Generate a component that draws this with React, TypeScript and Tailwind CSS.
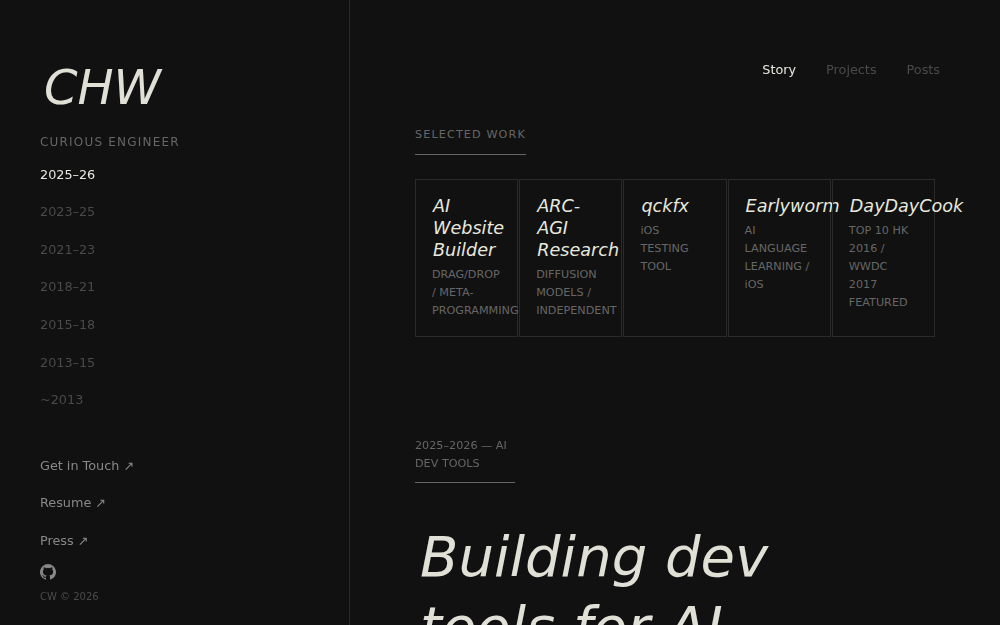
const FONT = "font-['DejaVu_Sans',sans-serif]";

const periods = ["2023–25", "2021–23", "2018–21", "2015–18", "2013–15", "~2013"];
const links = ["Get in Touch ↗", "Resume ↗", "Press ↗"];

const work = [
  { title: "AI Website Builder", sub: "DRAG/DROP / META-PROGRAMMING" },
  { title: "ARC-AGI Research", sub: "DIFFUSION MODELS / INDEPENDENT" },
  { title: "qckfx", sub: "iOS TESTING TOOL" },
  { title: "Earlyworm", sub: "AI LANGUAGE LEARNING / iOS" },
  { title: "DayDayCook", sub: "TOP 10 HK 2016 / WWDC 2017 FEATURED" },
];

function GithubIcon() {
  return (
    <svg viewBox="0 0 24 24" className="h-4 w-4 fill-[#888888]">
      <path d="M12 0a12 12 0 0 0-3.79 23.39c.6.11.82-.26.82-.58v-2.23c-3.34.73-4.04-1.41-4.04-1.41-.55-1.39-1.33-1.76-1.33-1.76-1.09-.74.08-.73.08-.73 1.2.09 1.84 1.24 1.84 1.24 1.07 1.83 2.81 1.3 3.5 1 .1-.78.42-1.31.76-1.61-2.67-.3-5.47-1.33-5.47-5.93 0-1.31.47-2.38 1.24-3.22-.14-.3-.54-1.52.1-3.18 0 0 1.01-.32 3.3 1.23a11.5 11.5 0 0 1 6 0c2.28-1.55 3.29-1.23 3.29-1.23.64 1.66.24 2.88.12 3.18.77.84 1.23 1.91 1.23 3.22 0 4.61-2.8 5.63-5.48 5.92.43.37.81 1.1.81 2.22v3.29c0 .32.22.7.82.58A12 12 0 0 0 12 0Z" />
    </svg>
  );
}

function Sidebar() {
  return (
    <aside className="flex h-full w-[350px] shrink-0 flex-col border-r border-[#2a2a2a] px-10 pt-[58px] will-change-transform">
      <h1 className="pl-[4px] text-[48px] leading-[58px] italic text-[#e0e0d6]">CHW</h1>
      <p className="mt-[17px] text-[12px] leading-[18px] tracking-[1.2px] uppercase text-[#666666]">Curious Engineer</p>

      {/* Timeline */}
      <nav className="mt-[13.8px] flex flex-col gap-[18.05px] text-[12.8px] leading-[19.5px]">
        <span className="text-[#e8e8e0]">2025–26</span>
        {periods.map((p) => (
          <span key={p} className="text-[#4a4a4a]">{p}</span>
        ))}
      </nav>

      <div className="mt-[46.1px] flex flex-col gap-[18.05px] text-[12.8px] leading-[19.5px] text-[#888888]">
        {links.map((l) => (
          <span key={l}>{l}</span>
        ))}
      </div>

      <div className="mt-[8px] flex flex-col">
        <div className="mt-[6px] h-4"><GithubIcon /></div>
        <p className="mt-[9px] text-[10px] leading-[15px] text-[#4a4a4a]">CW © 2026</p>
      </div>
    </aside>
  );
}

function WorkCard({ title, sub }: { title: string; sub: string }) {
  return (
    <div className="h-[158px] min-w-0 border border-[#2a2a2a] px-4 pt-[15px]">
      <h3 className="pl-[1px] text-[17.6px] leading-[22px] italic text-[#e8e8dc]">{title}</h3>
      <p className="mt-[5px] text-[11.2px] leading-[18px] text-[#666666]">{sub}</p>
    </div>
  );
}

export default function App() {
  return (
    <div className={`flex h-screen overflow-hidden bg-[#111111] ${FONT}`}>
      <Sidebar />

      <main className="flex-1 overflow-hidden pl-[65px] pr-[60px]">
        <nav className="flex justify-end gap-[30px] pt-[60px] text-[12.8px] leading-[19.5px] will-change-transform">
          <span className="text-[#e8e8e0]">Story</span>
          <span className="text-[#4a4a4a]">Projects</span>
          <span className="text-[#4a4a4a]">Posts</span>
        </nav>

        <section className="mt-[41px] w-[520px]">
          <div className="inline-block border-b border-[#666666] pb-[11px] text-[11.2px] leading-[16.5px] tracking-[1.12px] uppercase text-[#666666]">
            Selected Work
          </div>

          <div className="mt-6 grid grid-cols-5 gap-px">
            {work.map((w) => (
              <WorkCard key={w.title} {...w} />
            ))}
          </div>
        </section>

        <section className="mt-[100px] w-[520px] will-change-transform">
          <div className="w-[100px] border-b border-[#666666] pb-[9px] text-[11.2px] leading-[18px] uppercase text-[#666666]">
            2025–2026 — AI Dev Tools
          </div>
          <h2 className="mt-[39px] w-[400px] pl-[5px] text-[56px] leading-[70px] italic text-[#e0e0d6]">
            Building dev tools for AI
          </h2>
        </section>
      </main>
    </div>
  );
}
